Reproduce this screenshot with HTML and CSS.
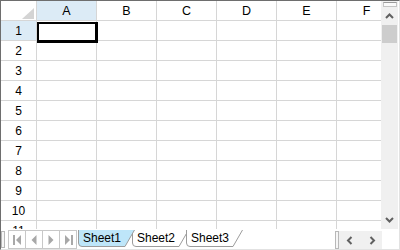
FILE: index.html
```html
<!DOCTYPE html>
<html lang="en">
<head>
    <meta charset="UTF-8">
    <meta name="viewport" content="width=device-width, initial-scale=1.0">
    <title>Spread</title>
    <link rel="stylesheet" href="styles.css">
</head>
<body>
    <div class="spread">
        <div class="main">
            <div class="sheet">
                <div class="row head">
                    <div class="cell rh corner"></div>
                    <div class="cell sel">A</div>
                    <div class="cell">B</div>
                    <div class="cell">C</div>
                    <div class="cell">D</div>
                    <div class="cell">E</div>
                    <div class="cell">F</div>
                </div>
                <div class="row">
                    <div class="cell rh sel">1</div>
                    <div class="cell active"></div>
                    <div class="cell"></div><div class="cell"></div><div class="cell"></div><div class="cell"></div><div class="cell"></div>
                </div>
                <div class="row"><div class="cell rh">2</div><div class="cell"></div><div class="cell"></div><div class="cell"></div><div class="cell"></div><div class="cell"></div><div class="cell"></div></div>
                <div class="row"><div class="cell rh">3</div><div class="cell"></div><div class="cell"></div><div class="cell"></div><div class="cell"></div><div class="cell"></div><div class="cell"></div></div>
                <div class="row"><div class="cell rh">4</div><div class="cell"></div><div class="cell"></div><div class="cell"></div><div class="cell"></div><div class="cell"></div><div class="cell"></div></div>
                <div class="row"><div class="cell rh">5</div><div class="cell"></div><div class="cell"></div><div class="cell"></div><div class="cell"></div><div class="cell"></div><div class="cell"></div></div>
                <div class="row"><div class="cell rh">6</div><div class="cell"></div><div class="cell"></div><div class="cell"></div><div class="cell"></div><div class="cell"></div><div class="cell"></div></div>
                <div class="row"><div class="cell rh">7</div><div class="cell"></div><div class="cell"></div><div class="cell"></div><div class="cell"></div><div class="cell"></div><div class="cell"></div></div>
                <div class="row"><div class="cell rh">8</div><div class="cell"></div><div class="cell"></div><div class="cell"></div><div class="cell"></div><div class="cell"></div><div class="cell"></div></div>
                <div class="row"><div class="cell rh">9</div><div class="cell"></div><div class="cell"></div><div class="cell"></div><div class="cell"></div><div class="cell"></div><div class="cell"></div></div>
                <div class="row"><div class="cell rh">10</div><div class="cell"></div><div class="cell"></div><div class="cell"></div><div class="cell"></div><div class="cell"></div><div class="cell"></div></div>
                <div class="row"><div class="cell rh">11</div><div class="cell"></div><div class="cell"></div><div class="cell"></div><div class="cell"></div><div class="cell"></div><div class="cell"></div></div>
            </div>
            <div class="vscroll">
                <div class="vsplit"></div>
                <div class="arrow">
                    <svg width="9" height="6" viewBox="0 0 9 6"><polyline points="1,5 4.5,1.5 8,5" fill="none" stroke="#606060" stroke-width="2"/></svg>
                </div>
                <div class="thumb"></div>
                <div class="track"></div>
                <div class="arrow">
                    <svg width="9" height="6" viewBox="0 0 9 6"><polyline points="1,1 4.5,4.5 8,1" fill="none" stroke="#606060" stroke-width="2"/></svg>
                </div>
            </div>
        </div>
        <div class="bottom">
            <div class="hsplit"></div>
            <div class="nav">
                <div class="nav-btn">
                    <svg width="9" height="10" viewBox="0 0 9 10"><rect x="0" y="0" width="2" height="10" fill="#a8a8a8"/><polygon points="8,0 8,10 3,5" fill="#a8a8a8"/></svg>
                </div>
                <div class="nav-btn">
                    <svg width="6" height="10" viewBox="0 0 6 10"><polygon points="5.5,0 5.5,10 0.5,5" fill="#a8a8a8"/></svg>
                </div>
                <div class="nav-btn">
                    <svg width="6" height="10" viewBox="0 0 6 10"><polygon points="0.5,0 0.5,10 5.5,5" fill="#a8a8a8"/></svg>
                </div>
                <div class="nav-btn">
                    <svg width="9" height="10" viewBox="0 0 9 10"><polygon points="1,0 1,10 6,5" fill="#a8a8a8"/><rect x="7" y="0" width="2" height="10" fill="#a8a8a8"/></svg>
                </div>
            </div>
            <div class="tabs">
                <div class="tab current">
                    <svg class="tab-bg" width="57" height="17" viewBox="0 0 57 17">
                        <path d="M0.5,0 V13 Q0.5,16.5 4,16.5 H47 L56.5,0 Z" fill="#bee6f9"/>
                        <path d="M0.5,0 V13 Q0.5,16.5 4,16.5 H47 L56.5,0" fill="none" stroke="#9c9c9c"/>
                    </svg>
                    <span>Sheet1</span>
                </div>
                <div class="tab">
                    <svg class="tab-bg" width="57" height="17" viewBox="0 0 57 17">
                        <path d="M0.5,0 V13 Q0.5,16.5 4,16.5 H47 L56.5,0 Z" fill="#fff"/>
                        <path d="M0.5,0 V13 Q0.5,16.5 4,16.5 H47 L56.5,0" fill="none" stroke="#9c9c9c"/>
                    </svg>
                    <span>Sheet2</span>
                </div>
                <div class="tab">
                    <svg class="tab-bg" width="57" height="17" viewBox="0 0 57 17">
                        <path d="M0.5,0 V13 Q0.5,16.5 4,16.5 H47 L56.5,0 Z" fill="#fff"/>
                        <path d="M0.5,0 V13 Q0.5,16.5 4,16.5 H47 L56.5,0" fill="none" stroke="#9c9c9c"/>
                    </svg>
                    <span>Sheet3</span>
                </div>
            </div>
            <div class="hsplit right"></div>
            <div class="hscroll">
                <svg width="7" height="9" viewBox="0 0 7 9"><polyline points="5.5,1 2,4.5 5.5,8" fill="none" stroke="#606060" stroke-width="2"/></svg>
                <svg width="7" height="9" viewBox="0 0 7 9"><polyline points="1.5,1 5,4.5 1.5,8" fill="none" stroke="#606060" stroke-width="2"/></svg>
            </div>
            <div class="corner-box"></div>
        </div>
    </div>
</body>
</html>
```

FILE: styles.css
```css
body {
    margin: 0;
    padding: 0;
    background-color: #fff;
    font-family: 'Liberation Sans', Arial, sans-serif;
    font-size: 12px;
    color: #000;
}
.spread {
    width: 400px;
    height: 250px;
    box-sizing: border-box;
    border-top: 1px solid #6e6e6e;
    border-left: 1px solid #6e6e6e;
    border-right: 1px solid #e2e2e2;
    border-bottom: 1px solid #e2e2e2;
    display: flex;
    flex-direction: column;
    overflow: hidden;
}
.main {
    display: flex;
    height: 228px;
    flex: none;
}
.sheet {
    width: 380px;
    height: 228px;
    overflow: hidden;
    flex: none;
}
.row {
    display: flex;
    height: 20px;
}
.cell {
    flex: none;
    width: 60px;
    height: 20px;
    box-sizing: border-box;
    border-right: 1px solid #d6d6d6;
    border-bottom: 1px solid #d6d6d6;
    display: flex;
    align-items: center;
    justify-content: center;
}
.cell.rh {
    width: 36px;
}
.head .cell {
    font-size: 12.5px;
}
.sel {
    background-color: #dcebf6;
}
.corner {
    position: relative;
}
.corner::after {
    content: "";
    position: absolute;
    right: 2px;
    bottom: 1px;
    width: 0;
    height: 0;
    border-left: 12px solid transparent;
    border-bottom: 11px solid #d4d4d4;
}
.active {
    position: relative;
}
.active::after {
    content: "";
    position: absolute;
    top: 1px;
    left: 0;
    width: 61px;
    height: 21px;
    box-sizing: border-box;
    border-style: solid;
    border-color: #000;
    border-width: 2px 3px 3px 2px;
}

/* vertical scrollbar */
.vscroll {
    width: 17px;
    flex: none;
    background-color: #f0f0f0;
    display: flex;
    flex-direction: column;
    align-items: center;
}
.vsplit {
    width: 14px;
    height: 5px;
    margin-top: 1px;
    box-sizing: border-box;
    border: 1px solid #c4c4c4;
    border-top-color: #9a9a9a;
    background-color: #fafafa;
}
.vscroll .arrow {
    height: 18px;
    display: flex;
    align-items: center;
    justify-content: center;
}
.thumb {
    width: 15px;
    height: 18px;
    background-color: #cdcdcd;
}
.track {
    flex: 1;
}

/* bottom bar */
.bottom {
    display: flex;
    height: 20px;
    flex: none;
}
.hsplit {
    width: 4px;
    height: 17px;
    margin-top: 2px;
    box-sizing: border-box;
    border: 1px solid #b8b8b8;
    background-color: #f6f6f6;
    flex: none;
}
.nav {
    display: flex;
    margin-left: 3px;
    margin-top: 1px;
    height: 19px;
    border-right: 1px solid #c8c8c8;
    flex: none;
}
.nav-btn {
    width: 17px;
    height: 19px;
    box-sizing: border-box;
    border-left: 1px solid #c8c8c8;
    border-top: 1px solid #c8c8c8;
    border-bottom: 1px solid #c8c8c8;
    display: flex;
    align-items: center;
    justify-content: center;
}
.tabs {
    display: flex;
    margin-left: 1px;
    margin-top: 1px;
    flex: 1;
}
.tab {
    position: relative;
    width: 57px;
    height: 17px;
    margin-right: -3px;
    flex: none;
}
.tab.current {
    z-index: 1;
}
.tab-bg {
    position: absolute;
    top: 0;
    left: 0;
}
.tab span {
    position: relative;
    display: block;
    padding-left: 5px;
    line-height: 16px;
}
.hsplit.right {
    margin-top: 2px;
    height: 18px;
}
.hscroll {
    width: 43px;
    height: 18px;
    margin-top: 2px;
    background-color: #f0f0f0;
    display: flex;
    align-items: center;
    justify-content: space-between;
    padding: 0 6px 0 7px;
    box-sizing: border-box;
    flex: none;
}
.corner-box {
    width: 17px;
    flex: none;
}
```
